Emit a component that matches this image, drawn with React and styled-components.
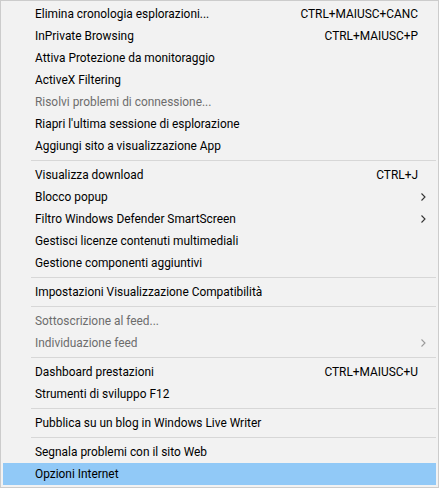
import React from "react";
import styled, { createGlobalStyle } from "styled-components";

const Global = createGlobalStyle`
  html, body { margin: 0; padding: 0; background: #ffffff; }
  #root { width: 439px; height: 488px; }
`;

const Menu = styled.div`
  box-sizing: border-box;
  width: 439px;
  height: 488px;
  background: #f2f2f2;
  border: 1px solid #cccccc;
  padding: 2px 2px 1px 2px;
  display: flex;
  flex-direction: column;
  font-family: "Roboto", "Liberation Sans", sans-serif;
  font-size: 11.9px;
  color: #000000;
`;

const Item = styled.div`
  height: 22px;
  display: grid;
  grid-template-columns: 1fr auto 16px;
  align-items: center;
  padding-left: 32px;
  padding-right: 2px;
  background: ${(p) => (p.$active ? "#91c9f7" : "transparent")};
  color: ${(p) => (p.$disabled ? "#6d6d6d" : "#000000")};
  white-space: nowrap;
`;

const Label = styled.span``;

const Shortcut = styled.span``;

const Arrow = styled.span`
  display: flex;
  justify-content: flex-start;
  padding-left: 3px;
  align-items: center;
  color: ${(p) => (p.$disabled ? "#9a9a9a" : "#333333")};
`;

const Separator = styled.div`
  height: 7px;
  display: flex;
  align-items: center;
  padding-left: 28px;
  &::after {
    content: "";
    flex: 1;
    height: 1px;
    background: #d7d7d7;
  }
`;

const Chevron = ({ disabled }) => (
  <Arrow $disabled={disabled}>
    <svg width="5" height="8" viewBox="0 0 5 8">
      <path d="M0.5 0.5 L4 4 L0.5 7.5" fill="none" stroke="currentColor" strokeWidth="1.1" />
    </svg>
  </Arrow>
);

const groups = [
  [
    { label: "Elimina cronologia esplorazioni...", sc: "CTRL+MAIUSC+CANC" },
    { label: "InPrivate Browsing", sc: "CTRL+MAIUSC+P" },
    { label: "Attiva Protezione da monitoraggio" },
    { label: "ActiveX Filtering" },
    { label: "Risolvi problemi di connessione...", disabled: true },
    { label: "Riapri l'ultima sessione di esplorazione" },
    { label: "Aggiungi sito a visualizzazione App" },
  ],
  [
    { label: "Visualizza download", sc: "CTRL+J" },
    { label: "Blocco popup", sub: true },
    { label: "Filtro Windows Defender SmartScreen", sub: true },
    { label: "Gestisci licenze contenuti multimediali" },
    { label: "Gestione componenti aggiuntivi" },
  ],
  [{ label: "Impostazioni Visualizzazione Compatibilità" }],
  [
    { label: "Sottoscrizione al feed...", disabled: true },
    { label: "Individuazione feed", disabled: true, sub: true },
  ],
  [
    { label: "Dashboard prestazioni", sc: "CTRL+MAIUSC+U" },
    { label: "Strumenti di sviluppo F12" },
  ],
  [{ label: "Pubblica su un blog in Windows Live Writer" }],
  [
    { label: "Segnala problemi con il sito Web" },
    { label: "Opzioni Internet", active: true },
  ],
];

export default function App() {
  return (
    <>
      <Global />
      <Menu>
        {groups.map((g, gi) => (
          <React.Fragment key={gi}>
            {gi > 0 && <Separator />}
            {g.map((it) => (
              <Item key={it.label} $disabled={it.disabled} $active={it.active}>
                <Label>{it.label}</Label>
                <Shortcut>{it.sc || ""}</Shortcut>
                {it.sub ? <Chevron disabled={it.disabled} /> : <span />}
              </Item>
            ))}
          </React.Fragment>
        ))}
      </Menu>
    </>
  );
}
